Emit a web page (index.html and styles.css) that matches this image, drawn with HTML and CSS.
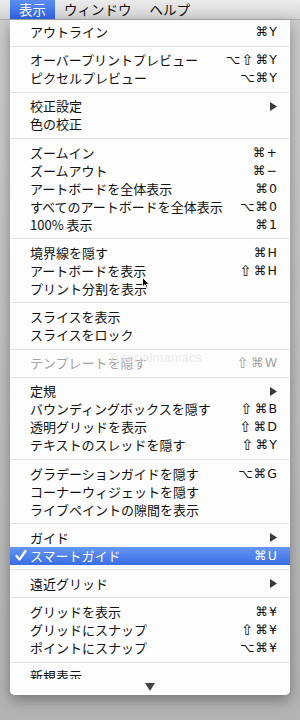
FILE: index.html
```html
<!DOCTYPE html>
<html>
<head>
	<meta charset="utf-8">
	<link rel="stylesheet" href="styles.css">
</head>
<body>
<div class="menubar">
	<span class="title active">表示</span>
	<span class="title">ウィンドウ</span>
	<span class="title">ヘルプ</span>
</div>

<div class="menu">
	<ul class="items">
		<li class="item"><span class="label">アウトライン</span><span class="key">⌘Y</span></li>
		<li class="sep"></li>
		<li class="item"><span class="label">オーバープリントプレビュー</span><span class="key">⌥<i class="shift">⇧</i>⌘Y</span></li>
		<li class="item"><span class="label">ピクセルプレビュー</span><span class="key">⌥⌘Y</span></li>
		<li class="sep"></li>
		<li class="item"><span class="label">校正設定</span><span class="key"><svg class="arrow" width="7" height="9" viewBox="0 0 7 9"><polygon points="0,0 7,4.5 0,9" /></svg></span></li>
		<li class="item"><span class="label">色の校正</span></li>
		<li class="sep"></li>
		<li class="item"><span class="label">ズームイン</span><span class="key">⌘+</span></li>
		<li class="item"><span class="label">ズームアウト</span><span class="key">⌘−</span></li>
		<li class="item"><span class="label">アートボードを全体表示</span><span class="key">⌘0</span></li>
		<li class="item"><span class="label">すべてのアートボードを全体表示</span><span class="key">⌥⌘0</span></li>
		<li class="item"><span class="label">100% 表示</span><span class="key">⌘1</span></li>
		<li class="sep"></li>
		<li class="item"><span class="label">境界線を隠す</span><span class="key">⌘H</span></li>
		<li class="item"><span class="label">アートボードを表示</span><span class="key"><i class="shift">⇧</i>⌘H</span></li>
		<li class="item"><span class="label">プリント分割を表示</span></li>
		<li class="sep"></li>
		<li class="item"><span class="label">スライスを表示</span></li>
		<li class="item"><span class="label">スライスをロック</span></li>
		<li class="sep"></li>
		<li class="item disabled"><span class="label">テンプレートを隠す</span><span class="key"><i class="shift">⇧</i>⌘W</span></li>
		<li class="sep"></li>
		<li class="item"><span class="label">定規</span><span class="key"><svg class="arrow" width="7" height="9" viewBox="0 0 7 9"><polygon points="0,0 7,4.5 0,9" /></svg></span></li>
		<li class="item"><span class="label">バウンディングボックスを隠す</span><span class="key"><i class="shift">⇧</i>⌘B</span></li>
		<li class="item"><span class="label">透明グリッドを表示</span><span class="key"><i class="shift">⇧</i>⌘D</span></li>
		<li class="item"><span class="label">テキストのスレッドを隠す</span><span class="key"><i class="shift">⇧</i>⌘Y</span></li>
		<li class="sep"></li>
		<li class="item"><span class="label">グラデーションガイドを隠す</span><span class="key">⌥⌘G</span></li>
		<li class="item"><span class="label">コーナーウィジェットを隠す</span></li>
		<li class="item"><span class="label">ライブペイントの隙間を表示</span></li>
		<li class="sep"></li>
		<li class="item"><span class="label">ガイド</span><span class="key"><svg class="arrow" width="7" height="9" viewBox="0 0 7 9"><polygon points="0,0 7,4.5 0,9" /></svg></span></li>
		<li class="item selected">
			<span class="check"><svg width="12" height="11" viewBox="0 0 12 11"><path d="M1.5 6 L4.5 9.5 L10.5 1" fill="none" stroke="#fff" stroke-width="2.2" stroke-linecap="round" stroke-linejoin="round" /></svg></span>
			<span class="label">スマートガイド</span><span class="key">⌘U</span>
		</li>
		<li class="sep"></li>
		<li class="item"><span class="label">遠近グリッド</span><span class="key"><svg class="arrow" width="7" height="9" viewBox="0 0 7 9"><polygon points="0,0 7,4.5 0,9" /></svg></span></li>
		<li class="sep"></li>
		<li class="item"><span class="label">グリッドを表示</span><span class="key">⌘¥</span></li>
		<li class="item"><span class="label">グリッドにスナップ</span><span class="key"><i class="shift">⇧</i>⌘¥</span></li>
		<li class="item"><span class="label">ポイントにスナップ</span><span class="key">⌥⌘¥</span></li>
		<li class="sep"></li>
		<li class="item"><span class="label">新規表示</span></li>
	</ul>
	<div class="more">
		<svg width="10" height="8" viewBox="0 0 10 8"><polygon points="0,0 10,0 5,8" /></svg>
	</div>

	<!-- watermark and pointer sit over the items -->
	<span class="watermark">Tutorialmaniacs</span>
	<svg class="cursor" width="8" height="12" viewBox="0 0 8 12"><path d="M0.5 0.5 L0.5 10 L3 7.6 L4.6 11.2 L6 10.6 L4.5 7.2 L7.5 7.2 Z" fill="#000" stroke="#fff" stroke-width="1" /></svg>
</div>
</body>
</html>
```

FILE: styles.css
```css
html, body {
  margin: 0;
  padding: 0;
}

body {
  width: 300px;
  height: 720px;
  overflow: hidden;
  background: linear-gradient(#cdcdcd, #b3b3b3);
  font-family: "Noto Sans CJK JP", "DejaVu Sans", sans-serif;
  font-size: 13px;
  color: #111;
}

.menubar {
  height: 20px;
  display: flex;
  background: linear-gradient(#ececec, #d2d2d2);
  border-bottom: 1px solid #a9a9a9;
  box-sizing: border-box;
  padding-left: 10px;
}

.title {
  padding: 0 9px;
  line-height: 19px;
  font-size: 13.5px;
}

.title.active {
  color: #fff;
  background: linear-gradient(#5b8ff2, #3162e2);
}

.menu {
  position: relative;
  width: 280px;
  height: 675px;
  margin-left: 10px;
  background: #fdfdfd;
  border-radius: 0 0 5px 5px;
  box-shadow: 0 5px 14px rgba(0, 0, 0, 0.35);
  display: flex;
  flex-direction: column;
  overflow: hidden;
}

.items {
  list-style: none;
  margin: 0;
  padding: 3px 0 0 0;
  flex: 1;
  overflow: hidden;
}

.item {
  display: grid;
  grid-template-columns: 20px 1fr auto;
  align-items: center;
  height: 18px;
  line-height: 18px;
  padding-right: 12px;
  white-space: nowrap;
}

.label {
  grid-column: 2;
}

.key {
  grid-column: 3;
  display: flex;
  align-items: center;
  font-family: "DejaVu Sans", sans-serif;
  font-size: 12.5px;
  letter-spacing: 1px;
}

.shift {
  font-style: normal;
  font-size: 15px;
  margin-right: 1px;
}

.arrow {
  fill: #3a3a3a;
  margin-right: 1px;
}

.check {
  grid-column: 1;
  grid-row: 1;
  display: flex;
  padding-left: 5px;
}

.selected {
  color: #fff;
  background: linear-gradient(#6597f4, #3b6de5);
}

.disabled {
  color: #a3a3a3;
}

.sep {
  height: 1px;
  margin: 4.6px 1px;
  background: #e3e3e3;
}

.more {
  height: 16px;
  display: flex;
  justify-content: center;
  align-items: center;
  background: #fdfdfd;
}

.more svg {
  fill: #444;
  margin-top: -1px;
}

.watermark {
  position: absolute;
  left: 98px;
  top: 330px;
  font-family: "Liberation Sans", sans-serif;
  font-size: 13px;
  color: #ebebeb;
  letter-spacing: 0.2px;
}

.cursor {
  position: absolute;
  left: 132px;
  top: 257px;
}
```
